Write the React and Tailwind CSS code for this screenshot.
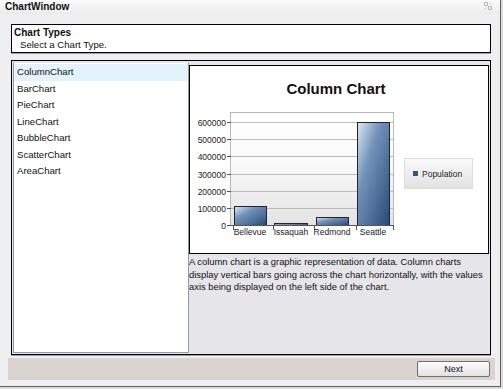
import React from 'react';

const chartTypes = ['ColumnChart', 'BarChart', 'PieChart', 'LineChart', 'BubbleChart', 'ScatterChart', 'AreaChart'];

const yTicks = [600000, 500000, 400000, 300000, 200000, 100000, 0];

const bars = [
  { label: 'Bellevue', x: 44, w: 32, value: 110000, cx: 60 },
  { label: 'Issaquah', x: 84, w: 33, value: 12000, cx: 101 },
  { label: 'Redmond', x: 126, w: 32, value: 47000, cx: 142 },
  { label: 'Seattle', x: 167, w: 32, value: 600000, cx: 183 },
];

// plot area in svg coords
const plotTop = 46;
const zeroY = 159;
const maxY = 56;
const yFor = (v) => zeroY - (v / 600000) * (zeroY - maxY);

function ColumnChart() {
  return (
    <svg width="298" height="187" className="block" style={{ fontFamily: '"Liberation Sans", Arial, sans-serif' }}>
      <defs>
        <linearGradient id="plotBg" x1="0" y1="0" x2="0" y2="1">
          <stop offset="0" stopColor="#ffffff" />
          <stop offset="0.4" stopColor="#fbfbfb" />
          <stop offset="1" stopColor="#e3e3e3" />
        </linearGradient>
        <linearGradient id="barFill" x1="0" y1="0" x2="1" y2="1">
          <stop offset="0" stopColor="#dde9f5" />
          <stop offset="0.35" stopColor="#7393ba" />
          <stop offset="1" stopColor="#274a76" />
        </linearGradient>
        <linearGradient id="legendBg" x1="0" y1="0" x2="0" y2="1">
          <stop offset="0" stopColor="#fafafa" />
          <stop offset="1" stopColor="#e2e2e2" />
        </linearGradient>
      </defs>

      <text x="146" y="28" textAnchor="middle" fontSize="15" fontWeight="bold" fill="#111">
        Column Chart
      </text>

      <rect x="40.5" y={plotTop + 0.5} width="163" height={zeroY - plotTop} fill="url(#plotBg)" stroke="#b9b9b9" />

      {yTicks.map((v) => {
        const y = Math.round(yFor(v)) + 0.5;
        return (
          <g key={v}>
            <line x1="37" x2="203" y1={y} y2={y} stroke="#bcbcbc" />
            <line x1="37" x2="41" y1={y} y2={y} stroke="#555" />
            <text x="36" y={y + 3} textAnchor="end" fontSize="8.5" fill="#222">
              {v}
            </text>
          </g>
        );
      })}

      {bars.map((b) => {
        const top = Math.round(yFor(b.value));
        return (
          <rect
            key={b.label}
            x={b.x + 0.5}
            y={top + 0.5}
            width={b.w}
            height={Math.max(zeroY - top, 1)}
            fill="url(#barFill)"
            stroke="#1c2632"
          />
        );
      })}

      <line x1="40" x2="203" y1={zeroY + 0.5} y2={zeroY + 0.5} stroke="#555" />
      {[43, 83, 124, 166, 203].map((x) => (
        <line key={x} x1={x + 0.5} x2={x + 0.5} y1={zeroY} y2={zeroY + 5} stroke="#555" />
      ))}

      {bars.map((b) => (
        <text key={b.label} x={b.cx} y="169" textAnchor="middle" fontSize="8.5" fill="#222">
          {b.label}
        </text>
      ))}

      <rect x="214.5" y="92.5" width="68" height="30" fill="url(#legendBg)" stroke="#dedede" />
      <rect x="223" y="105" width="5" height="5" fill="#2f5684" />
      <text x="232" y="111" fontSize="8.5" fill="#222">
        Population
      </text>
    </svg>
  );
}

export default function App() {
  return (
    <div
      className="w-[503px] h-[389px] bg-[#dcdcdc] overflow-hidden text-[#111]"
      style={{ fontFamily: '"Liberation Sans", Arial, sans-serif' }}
    >
      <div className="w-[501px] h-[387px] flex flex-col bg-[#efeff1] border-r border-b border-[#5e5e5e]">
        {/* title bar */}
        <div className="h-[14px] flex items-center justify-between pl-[5px] pr-[8px] bg-gradient-to-b from-[#fbfbfb] to-[#ebebeb]">
          <span className="text-[10px] font-bold leading-none">ChartWindow</span>
          <svg width="8" height="8" viewBox="0 0 8 8" className="mt-[-2px]">
            <path d="M0.5 0.5h3v3h-3z M4.5 4.5h3v3h-3z M3.5 3.5l1 1" fill="none" stroke="#b8b8b8" />
            <path d="M0.5 7.5l2-2 M7.5 0.5l-2 2" stroke="#c8c8c8" />
          </svg>
        </div>

        <div className="flex-1 flex flex-col pt-[10px]">
          {/* header */}
          <div className="ml-[11px] w-[480px] h-[29px] bg-white border border-black shadow-[0_1px_0_#a0a0a0] flex flex-col pl-[2px]">
            <span className="text-[10px] font-bold leading-[12px] mt-[1.5px]">Chart Types</span>
            <span className="text-[9.6px] leading-[12px] pl-[6px]">Select a Chart Type.</span>
          </div>

          {/* main */}
          <div className="ml-[11px] w-[480px] h-[295px] mt-[7px] border border-black shadow-[0_1px_0_#a0a0a0] bg-[#e6e6ea] p-[1px] flex">
            <ul className="w-[176px] bg-white border border-[#8d9cab] border-t-[#dfe6ec] pt-[1px]">
              {chartTypes.map((name, i) => (
                <li
                  key={name}
                  className={`h-[16.5px] flex items-center pl-[3px] text-[9.6px] ${i === 0 ? 'bg-[#e4f2fb]' : ''}`}
                >
                  {name}
                </li>
              ))}
            </ul>
            <div className="flex-1 flex flex-col pt-[3px]">
              <div className="border border-black bg-white">
                <ColumnChart />
              </div>
              <p className="pt-[2px] text-[9.4px] leading-[12.5px] text-[#111] whitespace-nowrap">
                A column chart is a graphic representation of data. Column charts
                <br />
                display vertical bars going across the chart horizontally, with the values
                <br />
                axis being displayed on the left side of the chart.
              </p>
            </div>
          </div>

          {/* footer */}
          <div className="ml-[8px] w-[487px] h-[22px] mt-[3px] bg-[#d9d5ce] flex items-center justify-end pr-[5px]">
            <button className="w-[73px] h-[16px] rounded-[2px] border border-[#707070] bg-gradient-to-b from-[#fdfdfd] to-[#e2e2e2] text-[9px] leading-none">
              Next
            </button>
          </div>
        </div>
      </div>
    </div>
  );
}
